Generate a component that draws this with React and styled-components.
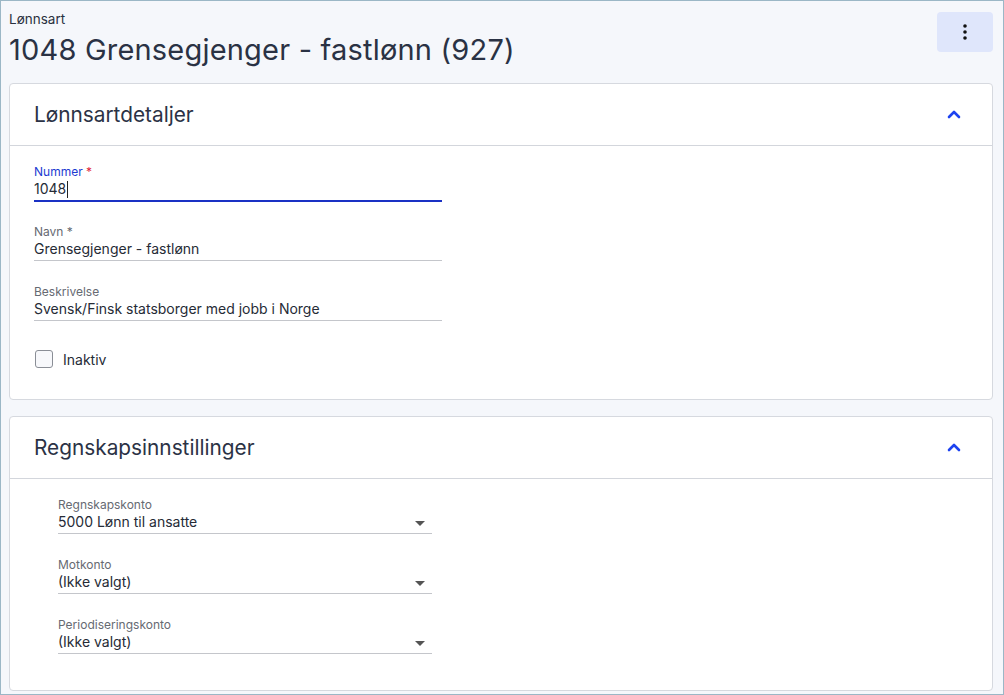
import styled, { createGlobalStyle } from 'styled-components';

const GlobalStyle = createGlobalStyle`
  html, body { margin: 0; padding: 0; }
  body {
    font-family: Inter, "Noto Sans", "Liberation Sans", sans-serif;
    background: #f5f7fb;
  }
  * { box-sizing: border-box; }
`;

export default function App() {
  return (
    <>
      <GlobalStyle />
      <Frame>
        <PageHeader>
          <div>
            <Kicker>Lønnsart</Kicker>
            <PageTitle>1048 Grensegjenger - fastlønn (927)</PageTitle>
          </div>
          <MenuButton aria-label="Meny">
            <svg width="6" height="18" viewBox="0 0 6 18">
              <circle cx="3" cy="3" r="1.8" fill="#111" />
              <circle cx="3" cy="9" r="1.8" fill="#111" />
              <circle cx="3" cy="15" r="1.8" fill="#111" />
            </svg>
          </MenuButton>
        </PageHeader>

        <Card>
          <CardHeader>
            <CardTitle>Lønnsartdetaljer</CardTitle>
            <Chevron />
          </CardHeader>
          <CardBody $indent={24} $bottom={31}>
            <Field $width={408}>
              <Label $focused>Nummer <Req>*</Req></Label>
              <Value $focused>1048<Caret /></Value>
            </Field>
            <Field $width={408}>
              <Label>Navn *</Label>
              <Value>Grensegjenger - fastlønn</Value>
            </Field>
            <Field $width={408}>
              <Label>Beskrivelse</Label>
              <Value>Svensk/Finsk statsborger med jobb i Norge</Value>
            </Field>
            <CheckRow>
              <Box />
              <span>Inaktiv</span>
            </CheckRow>
          </CardBody>
        </Card>

        <Card>
          <CardHeader>
            <CardTitle>Regnskapsinnstillinger</CardTitle>
            <Chevron />
          </CardHeader>
          <CardBody $indent={48} $bottom={36}>
            <Field $width={374}>
              <Label>Regnskapskonto</Label>
              <Value>5000 Lønn til ansatte<Arrow /></Value>
            </Field>
            <Field $width={374}>
              <Label>Motkonto</Label>
              <Value>(Ikke valgt)<Arrow /></Value>
            </Field>
            <Field $width={374}>
              <Label>Periodiseringskonto</Label>
              <Value>(Ikke valgt)<Arrow /></Value>
            </Field>
          </CardBody>
        </Card>
      </Frame>
    </>
  );
}

function Chevron() {
  return (
    <svg width="14" height="9" viewBox="0 0 14 9">
      <path d="M2 7 L7 2 L12 7" fill="none" stroke="#1d43f0" strokeWidth="2.6" strokeLinecap="round" strokeLinejoin="round" />
    </svg>
  );
}

function Arrow() {
  return (
    <ArrowIcon width="10" height="5" viewBox="0 0 10 5">
      <path d="M0 0 L10 0 L5 5 Z" fill="#555" />
    </ArrowIcon>
  );
}

const Frame = styled.div`
  height: 695px;
  border: 1px solid #9bb7c6;
  padding: 0 10px 3px 8px;
  display: flex;
  flex-direction: column;
  gap: 16px;
  overflow: hidden;
`;

const PageHeader = styled.div`
  display: flex;
  justify-content: space-between;
  align-items: flex-start;
  padding-top: 10px;
  margin-bottom: -3px;
`;

const Kicker = styled.div`
  font-size: 13.5px;
  line-height: 16px;
  color: #2a3140;
`;

const PageTitle = styled.h1`
  margin: 3px 0 0;
  font-size: 29px;
  line-height: 40px;
  font-weight: 400;
  color: #2a3244;
  letter-spacing: 0.2px;
`;

const MenuButton = styled.button`
  width: 56px;
  height: 40px;
  margin-top: 1px;
  border: none;
  border-radius: 4px;
  background: #dfe6fb;
  display: flex;
  align-items: center;
  justify-content: center;
  padding: 0;
`;

const Card = styled.section`
  background: #fff;
  border: 1px solid #d6d9df;
  border-radius: 4px;
`;

const CardHeader = styled.div`
  height: 62px;
  border-bottom: 1px solid #d3d6dc;
  display: flex;
  align-items: center;
  justify-content: space-between;
  padding: 0 31px 0 24px;
`;

const CardTitle = styled.h2`
  margin: 0;
  font-size: 20.8px;
  font-weight: 400;
  color: #2b3245;
`;

const CardBody = styled.div`
  padding: 19px 0 ${p => p.$bottom}px ${p => p.$indent}px;
  display: flex;
  flex-direction: column;
  gap: 24px;
`;

const Field = styled.div`
  width: ${p => p.$width}px;
`;

const Label = styled.div`
  font-size: 12px;
  line-height: 14px;
  color: ${p => (p.$focused ? '#1d3bd1' : '#666a72')};
`;

const Req = styled.span`
  color: #e0243a;
`;

const Value = styled.div`
  position: relative;
  display: flex;
  align-items: center;
  font-size: 14px;
  line-height: 20px;
  color: #262b36;
  padding-bottom: 1px;
  border-bottom: ${p => (p.$focused ? '2px solid #1a31c4' : '1px solid #c4c6cb')};
  margin-bottom: ${p => (p.$focused ? '-1px' : '0')};
`;

const Caret = styled.span`
  display: inline-block;
  width: 1px;
  height: 17px;
  background: #222;
  margin-left: 1px;
`;

const ArrowIcon = styled.svg`
  position: absolute;
  right: 7px;
  top: 9px;
`;

const CheckRow = styled.label`
  display: flex;
  align-items: center;
  gap: 10px;
  font-size: 14px;
  color: #262b36;
  margin-top: 5px;
  padding-left: 1px;
`;

const Box = styled.span`
  width: 18px;
  height: 18px;
  border: 1px solid #8a8e96;
  border-radius: 3px;
  background: #f7f8fb;
`;
